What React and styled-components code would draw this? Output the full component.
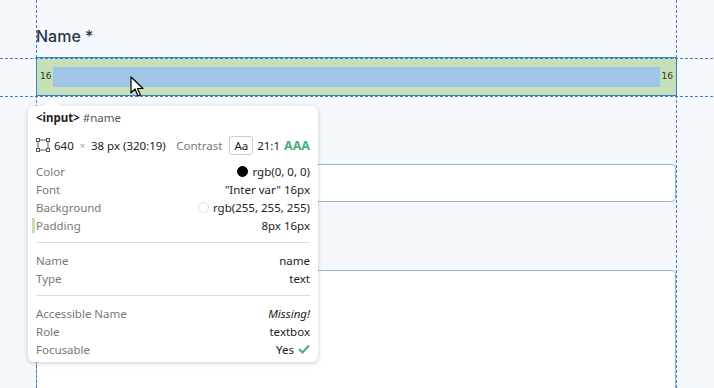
import styled, { createGlobalStyle } from "styled-components";

const GlobalStyle = createGlobalStyle`
  html, body { margin: 0; padding: 0; }
  body {
    background: #f5f9fe;
    font-family: Inter, "Noto Sans", sans-serif;
    width: 714px;
    height: 388px;
    overflow: hidden;
  }
`;

const Page = styled.div`
  position: relative;
  width: 714px;
  height: 388px;
  overflow: hidden;
  background: #f5f9fe;
`;

const Form = styled.form`
  display: flex;
  flex-direction: column;
  gap: 36px;
  width: 640px;
  padding: 26px 0 0 36px;
`;

const Field = styled.div`
  display: flex;
  flex-direction: column;
  gap: 12px;
  position: relative;
`;

const Label = styled.label`
  font-size: 16px;
  line-height: 20px;
  font-weight: 500;
  color: #2d3446;
`;

const Input = styled.input`
  box-sizing: border-box;
  height: 38px;
  width: 640px;
  padding: 8px 16px;
  border: 1px solid #93b5dd;
  border-radius: 4px;
  background: #fff;
  font: 16px Inter, sans-serif;
  outline: none;
`;

const TextArea = styled.textarea`
  box-sizing: border-box;
  height: 140px;
  width: 640px;
  border: 1px solid #93b5dd;
  border-radius: 4px;
  background: #fff;
  resize: none;
  outline: none;
`;

/* inspect overlay */
const Highlight = styled.div`
  position: absolute;
  left: 0;
  bottom: 0;
  box-sizing: border-box;
  width: 641px;
  height: 39px;
  border: 1px solid #3d7ec6;
  background: #c5dfb7;
  padding: 8px 16px;
  display: flex;
  align-items: center;
  font: 9px "DejaVu Sans", sans-serif;
  color: #333;
`;

const ContentBox = styled.div`
  flex: 1;
  height: 20px;
  background: #9fc5e7;
`;

const PadLabel = styled.span`
  position: absolute;
  top: 13px;
  ${({ side }) => (side === "left" ? "left: 3px;" : "right: 3px;")}
`;

const GuideV = styled.div`
  position: absolute;
  top: 0;
  bottom: 0;
  width: 1px;
  background: repeating-linear-gradient(to bottom, #3d7ec6 0 3px, transparent 3px 5px);
`;

const GuideH = styled.div`
  position: absolute;
  left: 0;
  right: 0;
  height: 1px;
  background: repeating-linear-gradient(to right, #3d7ec6 0 3px, transparent 3px 5px);
`;

const Cursor = styled.svg`
  position: absolute;
  left: 130px;
  top: 76px;
`;

const Tooltip = styled.div`
  position: absolute;
  left: 28px;
  top: 106px;
  width: 290px;
  box-sizing: border-box;
  padding: 1px 8px 4px;
  background: #fff;
  border-radius: 6px;
  box-shadow: 0 1px 4px rgba(0, 0, 0, 0.14), 0 2px 10px rgba(0, 0, 0, 0.06);
  font-family: "Noto Sans", "DejaVu Sans", sans-serif;
  font-size: 11.5px;
  color: #222;

  &::before {
    content: "";
    position: absolute;
    top: -8px;
    left: 16px;
    border-left: 8px solid transparent;
    border-right: 8px solid transparent;
    border-bottom: 8px solid #fff;
  }
`;

const Title = styled.div`
  line-height: 22px;
  color: #555;
  b { color: #222; font-weight: 700; }
`;

const SizeRow = styled.div`
  display: flex;
  align-items: center;
  height: 32px;
  gap: 4px;
`;

const Grey = styled.span`
  color: #777;
`;

const Times = styled.span`
  color: #999;
  font-size: 9px;
  margin: 0 2px;
`;

const Spacer = styled.div`
  flex: 1;
`;

const AaBox = styled.span`
  border: 1px solid #ccc;
  border-radius: 3px;
  padding: 1px 4px;
  margin: 0 0 0 3px;
  line-height: 15px;
`;

const Green = styled.span`
  color: #45b07e;
  font-weight: 700;
  font-size: 12.5px;
`;

const Section = styled.div`
  padding-top: 1px;
  & + & {
    border-top: 1px solid #ddd;
    margin-top: 8px;
    padding-top: 8px;
  }
`;

const Row = styled.div`
  display: flex;
  justify-content: space-between;
  align-items: center;
  height: 18px;
  position: relative;
  ${({ marked }) =>
    marked
      ? `&::before { content: ""; position: absolute; left: -4px; top: 2px; bottom: 1px; width: 3px; background: #c5dfb7; }`
      : ""}
`;

const Key = styled.span`
  color: #777;
`;

const Val = styled.span`
  display: flex;
  align-items: center;
  gap: 4px;
  font-style: ${({ italic }) => (italic ? "italic" : "normal")};
`;

const Swatch = styled.span`
  width: 11px;
  height: 11px;
  border-radius: 50%;
  box-sizing: border-box;
  background: ${({ color }) => color};
  border: 1px solid ${({ color }) => (color === "#fff" ? "#ddd" : color)};
`;

const props = [
  [
    ["Color", <><Swatch color="#000" />rgb(0, 0, 0)</>],
    ["Font", '"Inter var" 16px'],
    ["Background", <><Swatch color="#fff" />rgb(255, 255, 255)</>],
    ["Padding", "8px 16px", true],
  ],
  [
    ["Name", "name"],
    ["Type", "text"],
  ],
];

const App = () => (
  <Page>
    <GlobalStyle />
    <Form>
      <Field>
        <Label htmlFor="name">Name *</Label>
        <Input id="name" name="name" type="text" />
        <Highlight>
          <PadLabel side="left">16</PadLabel>
          <ContentBox />
          <PadLabel side="right">16</PadLabel>
        </Highlight>
      </Field>
      <Field>
        <Label>Email *</Label>
        <Input type="email" />
      </Field>
      <Field>
        <Label>Message</Label>
        <TextArea />
      </Field>
    </Form>

    <GuideV style={{ left: 36 }} />
    <GuideV style={{ left: 676 }} />
    <GuideH style={{ top: 58 }} />
    <GuideH style={{ top: 96 }} />

    <Cursor width="14" height="22" viewBox="0 0 14 22">
      <path d="M1 1 L1 17 L5 13 L8 20 L10.5 19 L7.5 12.5 L13 12.5 Z" fill="#fff" stroke="#000" strokeWidth="1.2" strokeLinejoin="round" />
    </Cursor>

    <Tooltip>
      <Title>
        <b>&lt;input&gt;</b> #name
      </Title>
      <SizeRow>
        <svg width="14" height="14" viewBox="0 0 14 14">
          <rect x="2" y="2" width="10" height="10" fill="none" stroke="#555" strokeWidth="1" />
          <rect x="0.5" y="0.5" width="3" height="3" fill="#fff" stroke="#555" />
          <rect x="10.5" y="0.5" width="3" height="3" fill="#fff" stroke="#555" />
          <rect x="0.5" y="10.5" width="3" height="3" fill="#fff" stroke="#555" />
          <rect x="10.5" y="10.5" width="3" height="3" fill="#fff" stroke="#555" />
        </svg>
        <span>640</span>
        <Times>×</Times>
        <span>38 px (320:19)</span>
        <Spacer />
        <Grey>Contrast</Grey>
        <AaBox>Aa</AaBox>
        <span>21:1</span>
        <Green>AAA</Green>
      </SizeRow>
      {props.map((group, i) => (
        <Section key={i}>
          {group.map(([k, v, marked]) => (
            <Row key={k} marked={marked}>
              <Key>{k}</Key>
              <Val>{v}</Val>
            </Row>
          ))}
        </Section>
      ))}
      <Section>
        <Row>
          <Key>Accessible Name</Key>
          <Val italic>Missing!</Val>
        </Row>
        <Row>
          <Key>Role</Key>
          <Val>textbox</Val>
        </Row>
        <Row>
          <Key>Focusable</Key>
          <Val>
            Yes
            <svg width="12" height="10" viewBox="0 0 12 10">
              <path d="M1 5 L4.5 8.5 L11 1.5" fill="none" stroke="#45b07e" strokeWidth="2" />
            </svg>
          </Val>
        </Row>
      </Section>
    </Tooltip>
  </Page>
);

export default App;
